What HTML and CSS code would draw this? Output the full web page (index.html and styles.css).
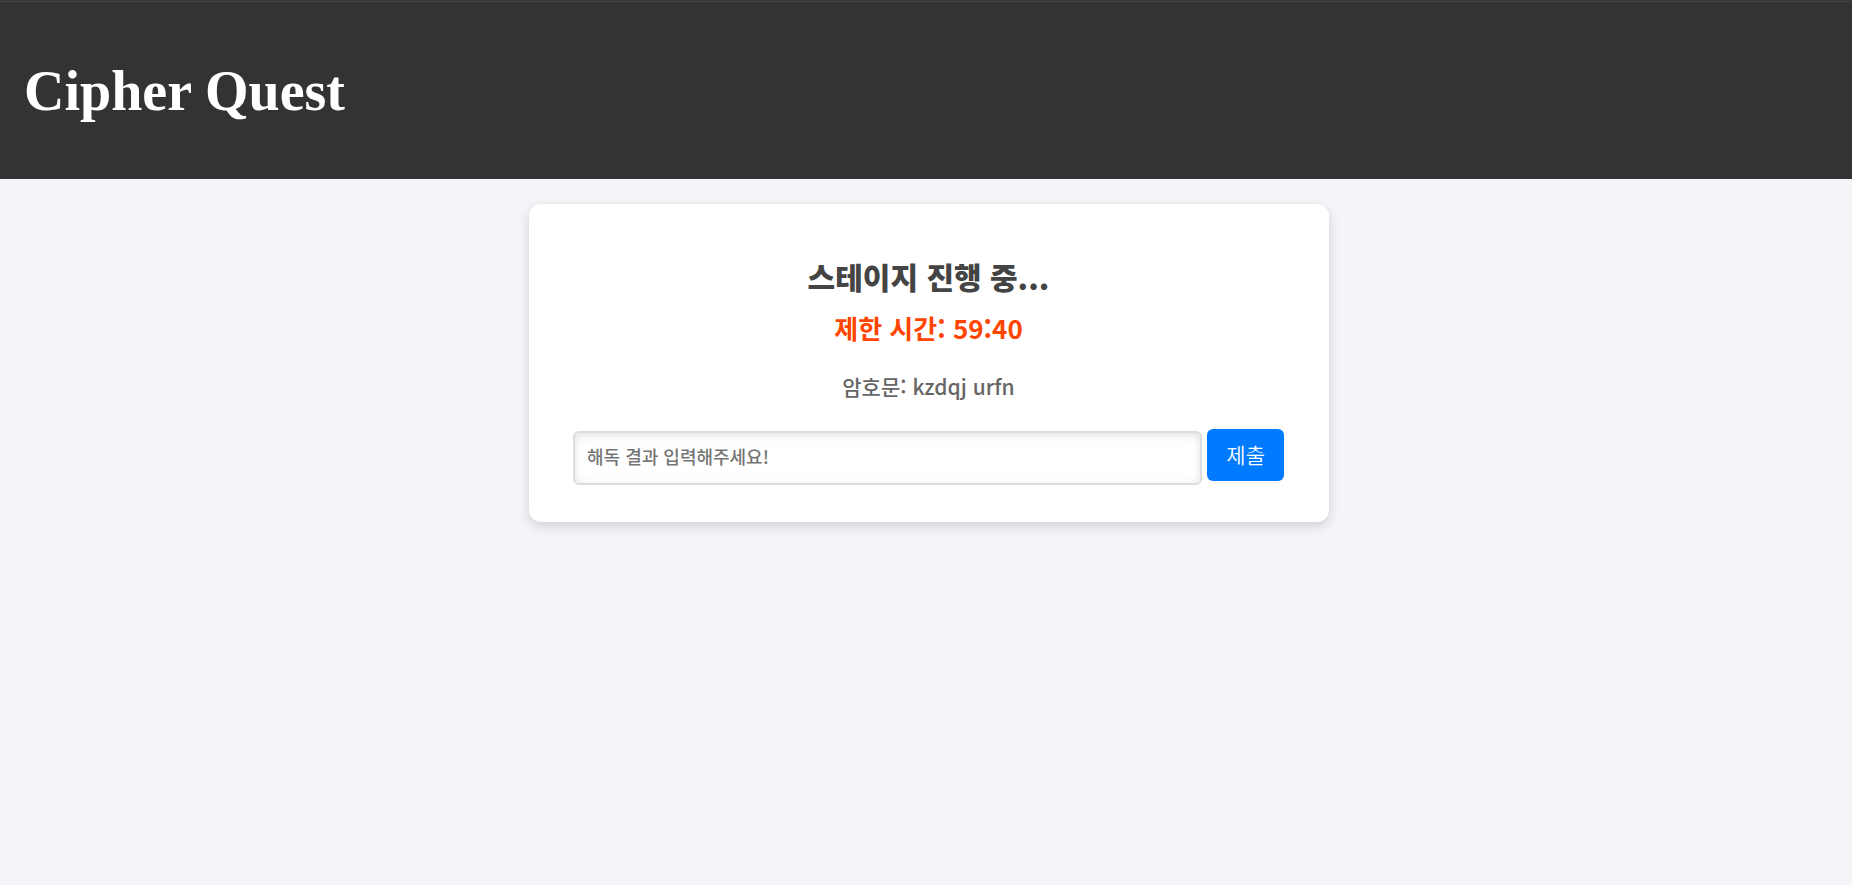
FILE: index.html
```html
<!DOCTYPE html>
<html lang="ko">
<head>
<meta charset="utf-8">
<title>Cipher Quest</title>
<link rel="stylesheet" href="styles.css">
</head>
<body>
<header class="site-header">
  <h1 class="brand">Cipher Quest</h1>
</header>
<main class="content">
  <section class="card">
    <h2 class="stage-title">스테이지 진행 중...</h2>
    <p class="timer">제한 시간: 59:40</p>
    <p class="cipher">암호문: kzdqj urfn</p>
    <form class="answer">
      <input class="answer-input" type="text" placeholder="해독 결과 입력해주세요!" aria-label="해독 결과">
      <button class="answer-submit" type="button">제출</button>
    </form>
  </section>
</main>
</body>
</html>
```
FILE: styles.css
```css
* {
  box-sizing: border-box;
}

body {
  margin: 0;
  background: #f4f4f9;
  color: #444;
  font-family: "Noto Sans CJK KR", sans-serif;
}

.site-header {
  margin-top: 1px;
  padding: 52px 24px 50px;
  border-top: 1px solid #444;
  background: #333;
  box-shadow: 0 -1px 0 #333;
}

.brand {
  margin: 0;
  color: #fff;
  font: bold 56px/75px "Liberation Serif", serif;
}

.content {
  display: flex;
  justify-content: center;
  padding: 25px 0 24px 6px;
}

.card {
  width: 100%;
  max-width: 800px;
  padding: 48px 45px 37px 44px;
  border-radius: 12px;
  background: #fff;
  box-shadow: 0 4px 12px rgba(0, 0, 0, 0.15);
  text-align: center;
}

.stage-title {
  margin: 0;
  color: #444;
  font-size: 30px;
  font-weight: 900;
  line-height: 48px;
}

.timer {
  margin: 8px 0 0;
  color: #ff4500;
  font-size: 26px;
  font-weight: 700;
  line-height: 40px;
}

.cipher {
  margin: 22px 0 0;
  color: #666;
  font-size: 21px;
  font-weight: 500;
  line-height: 32px;
}

.answer {
  display: flex;
  align-items: flex-start;
  gap: 5px;
  margin-top: 27px;
}

.answer-input {
  flex: 1;
  min-width: 0;
  height: 54px;
  margin-top: 2px;
  padding: 0 12px 5px 12px;
  border: 2px solid #ddd;
  border-radius: 6px;
  background: #fff;
  box-shadow: inset 0 2px 8px rgba(0, 0, 0, 0.12);
  color: #444;
  font: 500 18px "Noto Sans CJK KR", sans-serif;
}

.answer-input::placeholder {
  color: #757575;
  opacity: 1;
}

.answer-submit {
  height: 52px;
  padding: 0 19px 2px;
  border: 0;
  border-radius: 6px;
  background: #007bff;
  color: #fff;
  font: 350 21px "Noto Sans CJK KR", sans-serif;
}
```
